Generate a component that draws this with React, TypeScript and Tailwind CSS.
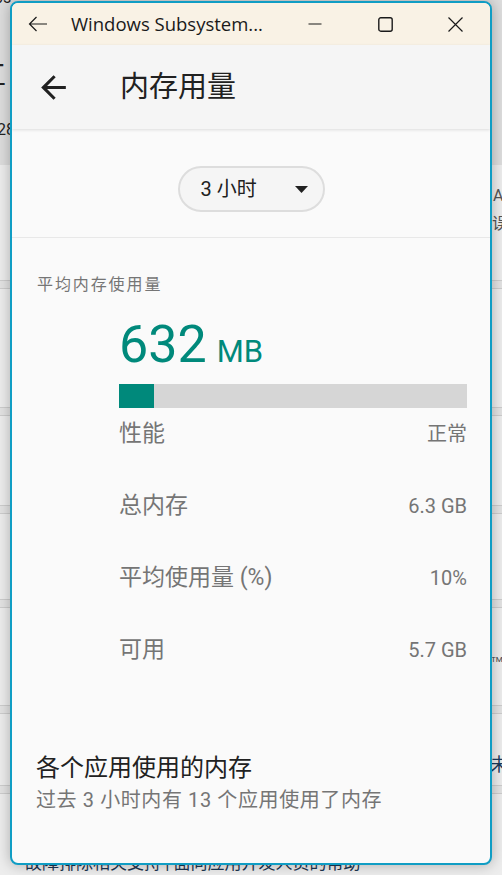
import React from 'react';

const stats = [
  { label: '性能', value: '正常' },
  { label: '总内存', value: '6.3 GB' },
  { label: '平均使用量 (%)', value: '10%' },
  { label: '可用', value: '5.7 GB' },
];

function Backdrop() {
  return (
    <div className="flex flex-col gap-[7px] bg-[#e3e3e3]">
      {/* top card, partly darker */}
      <div className="h-[281px] flex flex-col border-b border-[#cdcdcd] bg-[#ededed]">
        <div className="h-[165px] bg-[#dddddd] flex flex-col text-[#222]">
          <div className="-mt-[12px] -ml-[6px] text-[16px] leading-[20px]">bs</div>
          <div className="mt-[52px] -ml-[22px] text-[28px] leading-[32px]">工</div>
          <div className="mt-[28px] -ml-[3px] text-[16px] leading-[20px]">28</div>
        </div>
        <div className="mt-[20px] pl-[493px] whitespace-nowrap text-[16px] leading-[22px] text-[#555]">Android</div>
        <div className="mt-[6px] pl-[492px] whitespace-nowrap text-[16px] leading-[22px] text-[#555]">误差</div>
      </div>
      <div className="h-[120px] border-y border-[#cdcdcd] bg-[#ededed]" />
      <div className="h-[91px] border-y border-[#cdcdcd] bg-[#ededed]" />
      <div className="h-[87px] border-y border-[#cdcdcd] bg-[#ededed]" />
      <div className="h-[99px] border-y border-[#cdcdcd] bg-[#ededed] flex flex-col">
        <div className="mt-[47px] pl-[491px] whitespace-nowrap text-[8px] leading-[10px] text-[#444]">TM</div>
      </div>
      <div className="h-[73px] border-y border-[#cdcdcd] bg-[#ededed] flex flex-col">
        <div className="mt-[40px] pl-[490px] whitespace-nowrap text-[18px] leading-[22px] text-[#1d3a5c]">未设</div>
      </div>
      <div className="h-[90px] border-t border-[#cdcdcd] bg-[#ededed] flex flex-col">
        <div className="mt-[57px] pl-[25px] whitespace-nowrap text-[17px] leading-[24px] text-[#1d3550]">
          故障排除相关支持 | 面向应用开发人员的帮助
        </div>
      </div>
    </div>
  );
}

function TitleBar() {
  return (
    <div className="h-[42px] flex items-center bg-[#f9f2e5] text-[#1a1a1a]">
      <svg className="ml-[16px] w-[20px] h-[16px]" viewBox="0 0 20 16" fill="none" stroke="#1a1a1a" strokeWidth="1.2">
        <path d="M19 8H1.5M8.5 1L1.5 8l7 7" />
      </svg>
      <span className="ml-[23px] text-[18.5px] leading-[24px] font-['Open_Sans',sans-serif] whitespace-nowrap">
        Windows Subsystem...
      </span>
      <div className="ml-auto flex h-full">
        <div className="w-[70px] h-full flex items-center justify-center">
          <svg className="w-[14px] h-[14px]" viewBox="0 0 14 14" fill="none" stroke="#1a1a1a" strokeWidth="1.2">
            <path d="M0.5 7h13" />
          </svg>
        </div>
        <div className="w-[70px] h-full flex items-center justify-center">
          <svg className="w-[15px] h-[15px]" viewBox="0 0 15 15" fill="none" stroke="#1a1a1a" strokeWidth="1.4">
            <rect x="0.8" y="0.8" width="13.4" height="13.4" rx="2" />
          </svg>
        </div>
        <div className="w-[70px] h-full flex items-center justify-center">
          <svg className="w-[15px] h-[15px]" viewBox="0 0 15 15" fill="none" stroke="#1a1a1a" strokeWidth="1.2">
            <path d="M0.5 0.5l14 14M14.5 0.5l-14 14" />
          </svg>
        </div>
      </div>
    </div>
  );
}

export default function App() {
  return (
    <div className="relative w-[502px] h-[875px] overflow-hidden font-['Roboto','Noto_Sans_CJK_SC',sans-serif]">
      <Backdrop />

      {/* app window */}
      <div className="absolute left-[10px] top-[1px] w-[482px] h-[864px] flex flex-col rounded-[8px] border-2 border-[#109dc4] bg-[#fafafa] overflow-hidden shadow-[0_0_14px_rgba(0,0,0,0.28)]">
        <TitleBar />

        {/* Header */}
        <div className="relative z-10 h-[84px] flex items-center bg-[#f5f5f5] shadow-[0_1px_3px_rgba(0,0,0,0.12)]">
          <svg className="ml-[23px] w-[37px] h-[37px]" viewBox="0 0 24 24" fill="#212121">
            <path d="M20 11H7.83l5.59-5.59L12 4l-8 8 8 8 1.41-1.41L7.83 13H20v-2z" />
          </svg>
          <h1 className="ml-[48px] text-[29px] leading-[40px] text-[#212121]">内存用量</h1>
        </div>

        {/* Range picker */}
        <div className="pt-[37px] pb-[25px] flex justify-center border-b border-[#e8e8e8]">
          <div className="w-[147px] h-[46px] flex items-center pl-[21px] pr-[15px] rounded-full border-2 border-[#dddddd] bg-[#f5f5f5]">
            <span className="text-[20px] leading-[26px] text-[#212121]">3 小时</span>
            <svg className="ml-auto w-[13px] h-[7px]" viewBox="0 0 13 7" fill="#212121">
              <polygon points="0,0 13,0 6.5,7" />
            </svg>
          </div>
        </div>

        {/* Average usage */}
        <div className="flex flex-col">
          <div className="pt-[35px] pl-[25px] text-[16px] leading-[24px] tracking-[1.9px] text-[#757575]">平均内存使用量</div>

          <div className="mt-[22px] pl-[107px] flex items-baseline text-[#00897b]">
            <span className="text-[52px] leading-none">632</span>
            <span className="ml-[10px] text-[31px] leading-none">MB</span>
          </div>

          <div className="mt-[13px] ml-[107px] mr-[23px] h-[24px] bg-[#d6d6d6]">
            <div className="h-full bg-[#00897b]" style={{ width: '10%' }} />
          </div>

          <div className="mt-[10px] pl-[107px] pr-[23px] flex flex-col gap-[40px]">
            {stats.map((s) => (
              <div key={s.label} className="h-[32px] flex items-center justify-between text-[#757575]">
                <span className="text-[23px]">{s.label}</span>
                <span className="text-[20px]">{s.value}</span>
              </div>
            ))}
          </div>

          {/* Per-app */}
          <div className="mt-[86px] pl-[24px] text-[24px] leading-[32px] text-[#212121]">各个应用使用的内存</div>
          <div className="mt-[3px] pl-[24px] text-[20px] leading-[26px] tracking-[0.6px] text-[#757575]">
            过去 3 小时内有 13 个应用使用了内存
          </div>
        </div>
      </div>
    </div>
  );
}
